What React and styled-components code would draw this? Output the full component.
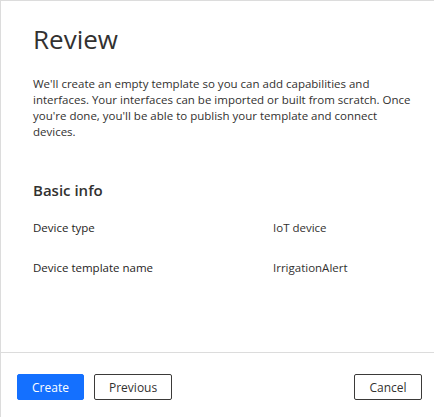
import React from 'react';
import styled, { createGlobalStyle } from 'styled-components';

const GlobalStyle = createGlobalStyle`
	html, body {
		margin: 0;
		padding: 0;
		background: #ffffff;
	}
	body {
		font-family: 'Open Sans', 'Noto Sans', sans-serif;
		color: #323130;
	}
`;

const Panel = styled.div`
	width: 434px;
	height: 417px;
	box-sizing: border-box;
	border-top: 1px solid #dcdcdc;
	border-left: 1px solid #dcdcdc;
	display: flex;
	flex-direction: column;
	background: #ffffff;
`;

const Body = styled.div`
	flex-grow: 1;
	padding: 20px 16px 0 32px;
	box-sizing: border-box;
`;

const Title = styled.h1`
	margin: 0;
	font-size: 26px;
	font-weight: 400;
	line-height: 36px;
	color: #323130;
`;

const Description = styled.p`
	margin: 19px 0 0;
	font-size: 11.5px;
	line-height: 16px;
	color: #323130;
`;

const SectionTitle = styled.h2`
	margin: 38px 0 0;
	font-size: 15px;
	font-weight: 600;
	line-height: 24px;
	color: #323130;
`;

const InfoList = styled.div`
	margin-top: 18px;
	display: flex;
	flex-direction: column;
	gap: 24px;
`;

const InfoRow = styled.div`
	display: grid;
	grid-template-columns: 240px 1fr;
	font-size: 11.5px;
	line-height: 16px;
`;

const Label = styled.div`
	font-weight: 500;
	color: #252423;
`;

const Value = styled.div`
	color: #323130;
`;

const Footer = styled.div`
	height: 65px;
	border-top: 1px solid #dcdcdc;
	box-sizing: border-box;
	padding: 21px 12px 0 16px;
	display: flex;
	align-items: flex-start;
	gap: 10px;
`;

const Button = styled.button`
	height: 26px;
	min-width: ${(props) => props.width || 67}px;
	padding: 0 14px;
	box-sizing: border-box;
	font-family: 'Open Sans', 'Noto Sans', sans-serif;
	font-size: 12px;
	font-weight: 400;
	border-radius: 2px;
	cursor: pointer;
	background-color: ${(props) => (props.primary ? '#1470ff' : '#ffffff')};
	color: ${(props) => (props.primary ? '#ffffff' : '#323130')};
	border: 1px solid ${(props) => (props.primary ? '#1470ff' : '#3b3a39')};
	margin-left: ${(props) => (props.pushRight ? 'auto' : '0')};
`;

const rows = [
	{ label: 'Device type', value: 'IoT device' },
	{ label: 'Device template name', value: 'IrrigationAlert' },
];

const App = () => {
	return (
		<>
			<GlobalStyle />
			<Panel>
				<Body>
					<Title>Review</Title>
					<Description>
						We'll create an empty template so you can add capabilities and
						interfaces. Your interfaces can be imported or built from scratch.
						Once you're done, you'll be able to publish your template and
						connect devices.
					</Description>
					<SectionTitle>Basic info</SectionTitle>
					<InfoList>
						{rows.map((row) => (
							<InfoRow key={row.label}>
								<Label>{row.label}</Label>
								<Value>{row.value}</Value>
							</InfoRow>
						))}
					</InfoList>
				</Body>
				<Footer>
					<Button primary>Create</Button>
					<Button width={77}>Previous</Button>
					<Button width={68} pushRight>
						Cancel
					</Button>
				</Footer>
			</Panel>
		</>
	);
};

export default App;
